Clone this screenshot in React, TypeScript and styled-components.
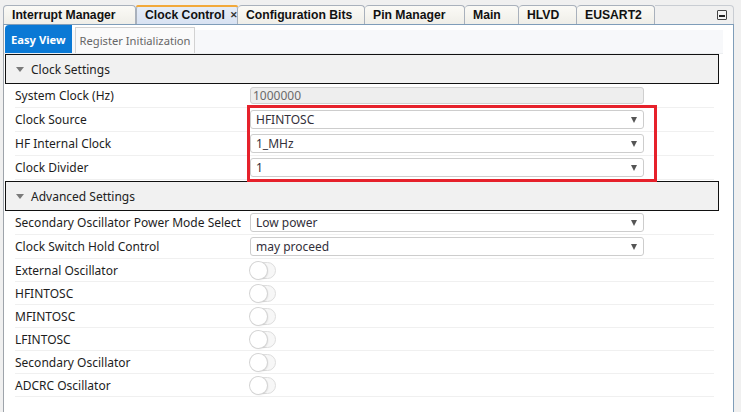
import React from "react"
import styled, { createGlobalStyle } from "styled-components"

const GlobalStyle = createGlobalStyle`
  html, body {
    margin: 0;
    padding: 0;
    background: #f0f0f0;
  }
  * {
    box-sizing: border-box;
  }
`

const uiFont = `"Noto Sans", "Open Sans", sans-serif`

const Window = styled.div`
  width: 741px;
  height: 412px;
  overflow: hidden;
  background: #f0f0f0;
  font-family: ${uiFont};
`

const TabStrip = styled.div`
  display: flex;
  align-items: stretch;
  height: 24px;
  margin-left: 3px;
  width: 731px;
  padding-top: 5px;
`

const Tab = styled.div<{ $w: number; $active?: boolean }>`
  position: relative;
  display: flex;
  align-items: center;
  width: ${p => p.$w}px;
  padding-left: 8px;
  border: 1px solid #a9b1bc;
  border-bottom: none;
  border-left-width: ${p => (p.$active ? 1 : 0)}px;
  border-radius: 4px 4px 0 0;
  background: ${p =>
    p.$active
      ? "linear-gradient(#e6edf8, #d8e2f2)"
      : "linear-gradient(#fbfaf6, #efeee8)"};
  font-family: "Liberation Sans", Arial, sans-serif;
  font-weight: bold;
  font-size: 12.2px;
  color: #111;
  white-space: nowrap;

  &:first-child {
    border-left-width: 1px;
  }

  ${p =>
    p.$active &&
    `
    &::before {
      content: "";
      position: absolute;
      left: -1px;
      right: -1px;
      top: -1px;
      height: 2px;
      background: #f2a93b;
      border-radius: 3px 3px 0 0;
    }
  `}
`

const Close = styled.span`
  margin-left: 5px;
  font-size: 9px;
  color: #333;
`

const TabFiller = styled.div`
  flex: 1;
  display: flex;
  align-items: center;
  justify-content: flex-end;
  padding-right: 6px;
  border-top: 1px solid #c9cdd3;
  border-right: 1px solid #c9cdd3;
  border-radius: 0 4px 0 0;
`

const MinButton = styled.div`
  position: relative;
  width: 10px;
  height: 10px;
  border: 1px solid #444;
  border-radius: 1px;
  background: #f4f4f4;

  &::after {
    content: "";
    position: absolute;
    left: 1px;
    right: 1px;
    bottom: 2px;
    height: 2px;
    background: #222;
  }
`

const Panel = styled.div`
  position: relative;
  margin-left: 3px;
  width: 731px;
  height: 388px;
  background: #fff;
  border-top: 1px solid #7f9db9;
  border-left: 1px solid #9ea4ab;
  border-right: 1px solid #7f9db9;
`

const SubTabBar = styled.div`
  display: flex;
  align-items: flex-end;
  gap: 3px;
  height: 29px;
  margin-right: 10px;
  padding-left: 1px;
  background: linear-gradient(#fff 0 5px, #f7f8fa 5px);
  border-bottom: 1px solid #eceef0;
`

const SubTab = styled.div<{ $active?: boolean }>`
  display: flex;
  align-items: center;
  height: ${p => (p.$active ? 28 : 26)}px;
  padding: ${p => (p.$active ? "0 6px" : "0 3px 0 4px")};
  background: ${p => (p.$active ? "#0a79d5" : "#fafafa")};
  border: ${p => (p.$active ? "none" : "1px solid #d2d2d2")};
  border-bottom: none;
  border-radius: ${p => (p.$active ? "4px 0 0 0" : "0")};
  color: ${p => (p.$active ? "#fff" : "#666")};
  font-weight: ${p => (p.$active ? 700 : 400)};
  font-size: 11.2px;
  white-space: nowrap;
`

const Content = styled.div`
  padding-left: 1px;
`

const SectionHeader = styled.div<{ $gap?: number }>`
  display: flex;
  align-items: center;
  gap: 7px;
  width: 714px;
  height: 30px;
  margin-top: ${p => p.$gap ?? 0}px;
  padding-left: 10px;
  background: #f1f1f1;
  border: 1px solid #111;
  font-size: 12px;
  color: #222;
`

const Caret = styled.span`
  width: 0;
  height: 0;
  border-left: 4px solid transparent;
  border-right: 4px solid transparent;
  border-top: 5px solid #7a7a7a;
`

const Rows = styled.div`
  position: relative;
  margin-left: 10px;
  width: 699px;
`

const Row = styled.div<{ $h?: number }>`
  display: grid;
  grid-template-columns: 235px 394px;
  align-items: center;
  height: ${p => p.$h ?? 24}px;
  border-bottom: 1px solid #f0f0f0;
  font-size: 12px;
  color: #1d1d1d;
`

const Label = styled.span`
  white-space: nowrap;
`

const ReadOnlyField = styled.div`
  display: flex;
  align-items: center;
  height: 17px;
  padding-left: 2px;
  background: #eeeeee;
  border: 1px solid #cfcfcf;
  border-radius: 3px;
  color: #6a6a6a;
  font-size: 12px;
`

const Select = styled.div`
  display: flex;
  align-items: center;
  justify-content: space-between;
  height: 19px;
  padding: 0 6px 0 5px;
  background: #fff;
  border: 1px solid #cdcdcd;
  border-radius: 3px;
  color: #33303a;
  font-size: 12px;
`

const Arrow = styled.span`
  width: 0;
  height: 0;
  border-left: 3px solid transparent;
  border-right: 3px solid transparent;
  border-top: 6px solid #555;
`

const Highlight = styled.div`
  position: absolute;
  left: 232px;
  top: -3px;
  width: 410px;
  height: 77px;
  border: 3px solid #e6212b;
  pointer-events: none;
`

const Toggle = styled.div`
  position: relative;
  width: 26px;
  height: 17px;
  border-radius: 9px;
  background: #f7f7f7;
  border: 1px solid #dedede;

  &::after {
    content: "";
    position: absolute;
    left: -1px;
    top: -1px;
    width: 17px;
    height: 17px;
    border-radius: 50%;
    background: #fff;
    box-shadow: 0 0 0 1px #d4d4d4, 1px 1px 2px rgba(0, 0, 0, 0.12);
  }
`

const tabs = [
  { name: "Interrupt Manager", w: 133 },
  { name: "Clock Control", w: 102, active: true },
  { name: "Configuration Bits", w: 127 },
  { name: "Pin Manager", w: 100 },
  { name: "Main", w: 54 },
  { name: "HLVD", w: 58 },
  { name: "EUSART2", w: 78 },
]

const clockSelects = [
  { label: "Clock Source", value: "HFINTOSC" },
  { label: "HF Internal Clock", value: "1_MHz" },
  { label: "Clock Divider", value: "1" },
]

const advancedSelects = [
  { label: "Secondary Oscillator Power Mode Select", value: "Low power" },
  { label: "Clock Switch Hold Control", value: "may proceed" },
]

const oscillators = [
  "External Oscillator",
  "HFINTOSC",
  "MFINTOSC",
  "LFINTOSC",
  "Secondary Oscillator",
  "ADCRC Oscillator",
]

const SelectRow = ({ label, value }: { label: string; value: string }) => (
  <Row>
    <Label>{label}</Label>
    <Select>
      <span>{value}</span>
      <Arrow />
    </Select>
  </Row>
)

const App = () => {
  return (
    <Window>
      <GlobalStyle />
      <TabStrip>
        {tabs.map(t => (
          <Tab key={t.name} $w={t.w} $active={t.active}>
            {t.name}
            {t.active && <Close>✕</Close>}
          </Tab>
        ))}
        <TabFiller>
          <MinButton />
        </TabFiller>
      </TabStrip>
      <Panel>
        <SubTabBar>
          <SubTab $active>Easy View</SubTab>
          <SubTab>Register Initialization</SubTab>
        </SubTabBar>
        <Content>
          <SectionHeader>
            <Caret />
            Clock Settings
          </SectionHeader>
          <Rows>
            <Row>
              <Label>System Clock (Hz)</Label>
              <ReadOnlyField>1000000</ReadOnlyField>
            </Row>
          </Rows>
          <Rows>
            {clockSelects.map(s => (
              <SelectRow key={s.label} {...s} />
            ))}
            <Highlight />
          </Rows>
          <SectionHeader $gap={1}>
            <Caret />
            Advanced Settings
          </SectionHeader>
          <Rows>
            {advancedSelects.map(s => (
              <SelectRow key={s.label} {...s} />
            ))}
            {oscillators.map(o => (
              <Row key={o} $h={23}>
                <Label>{o}</Label>
                <Toggle />
              </Row>
            ))}
          </Rows>
        </Content>
      </Panel>
    </Window>
  )
}

export default App
